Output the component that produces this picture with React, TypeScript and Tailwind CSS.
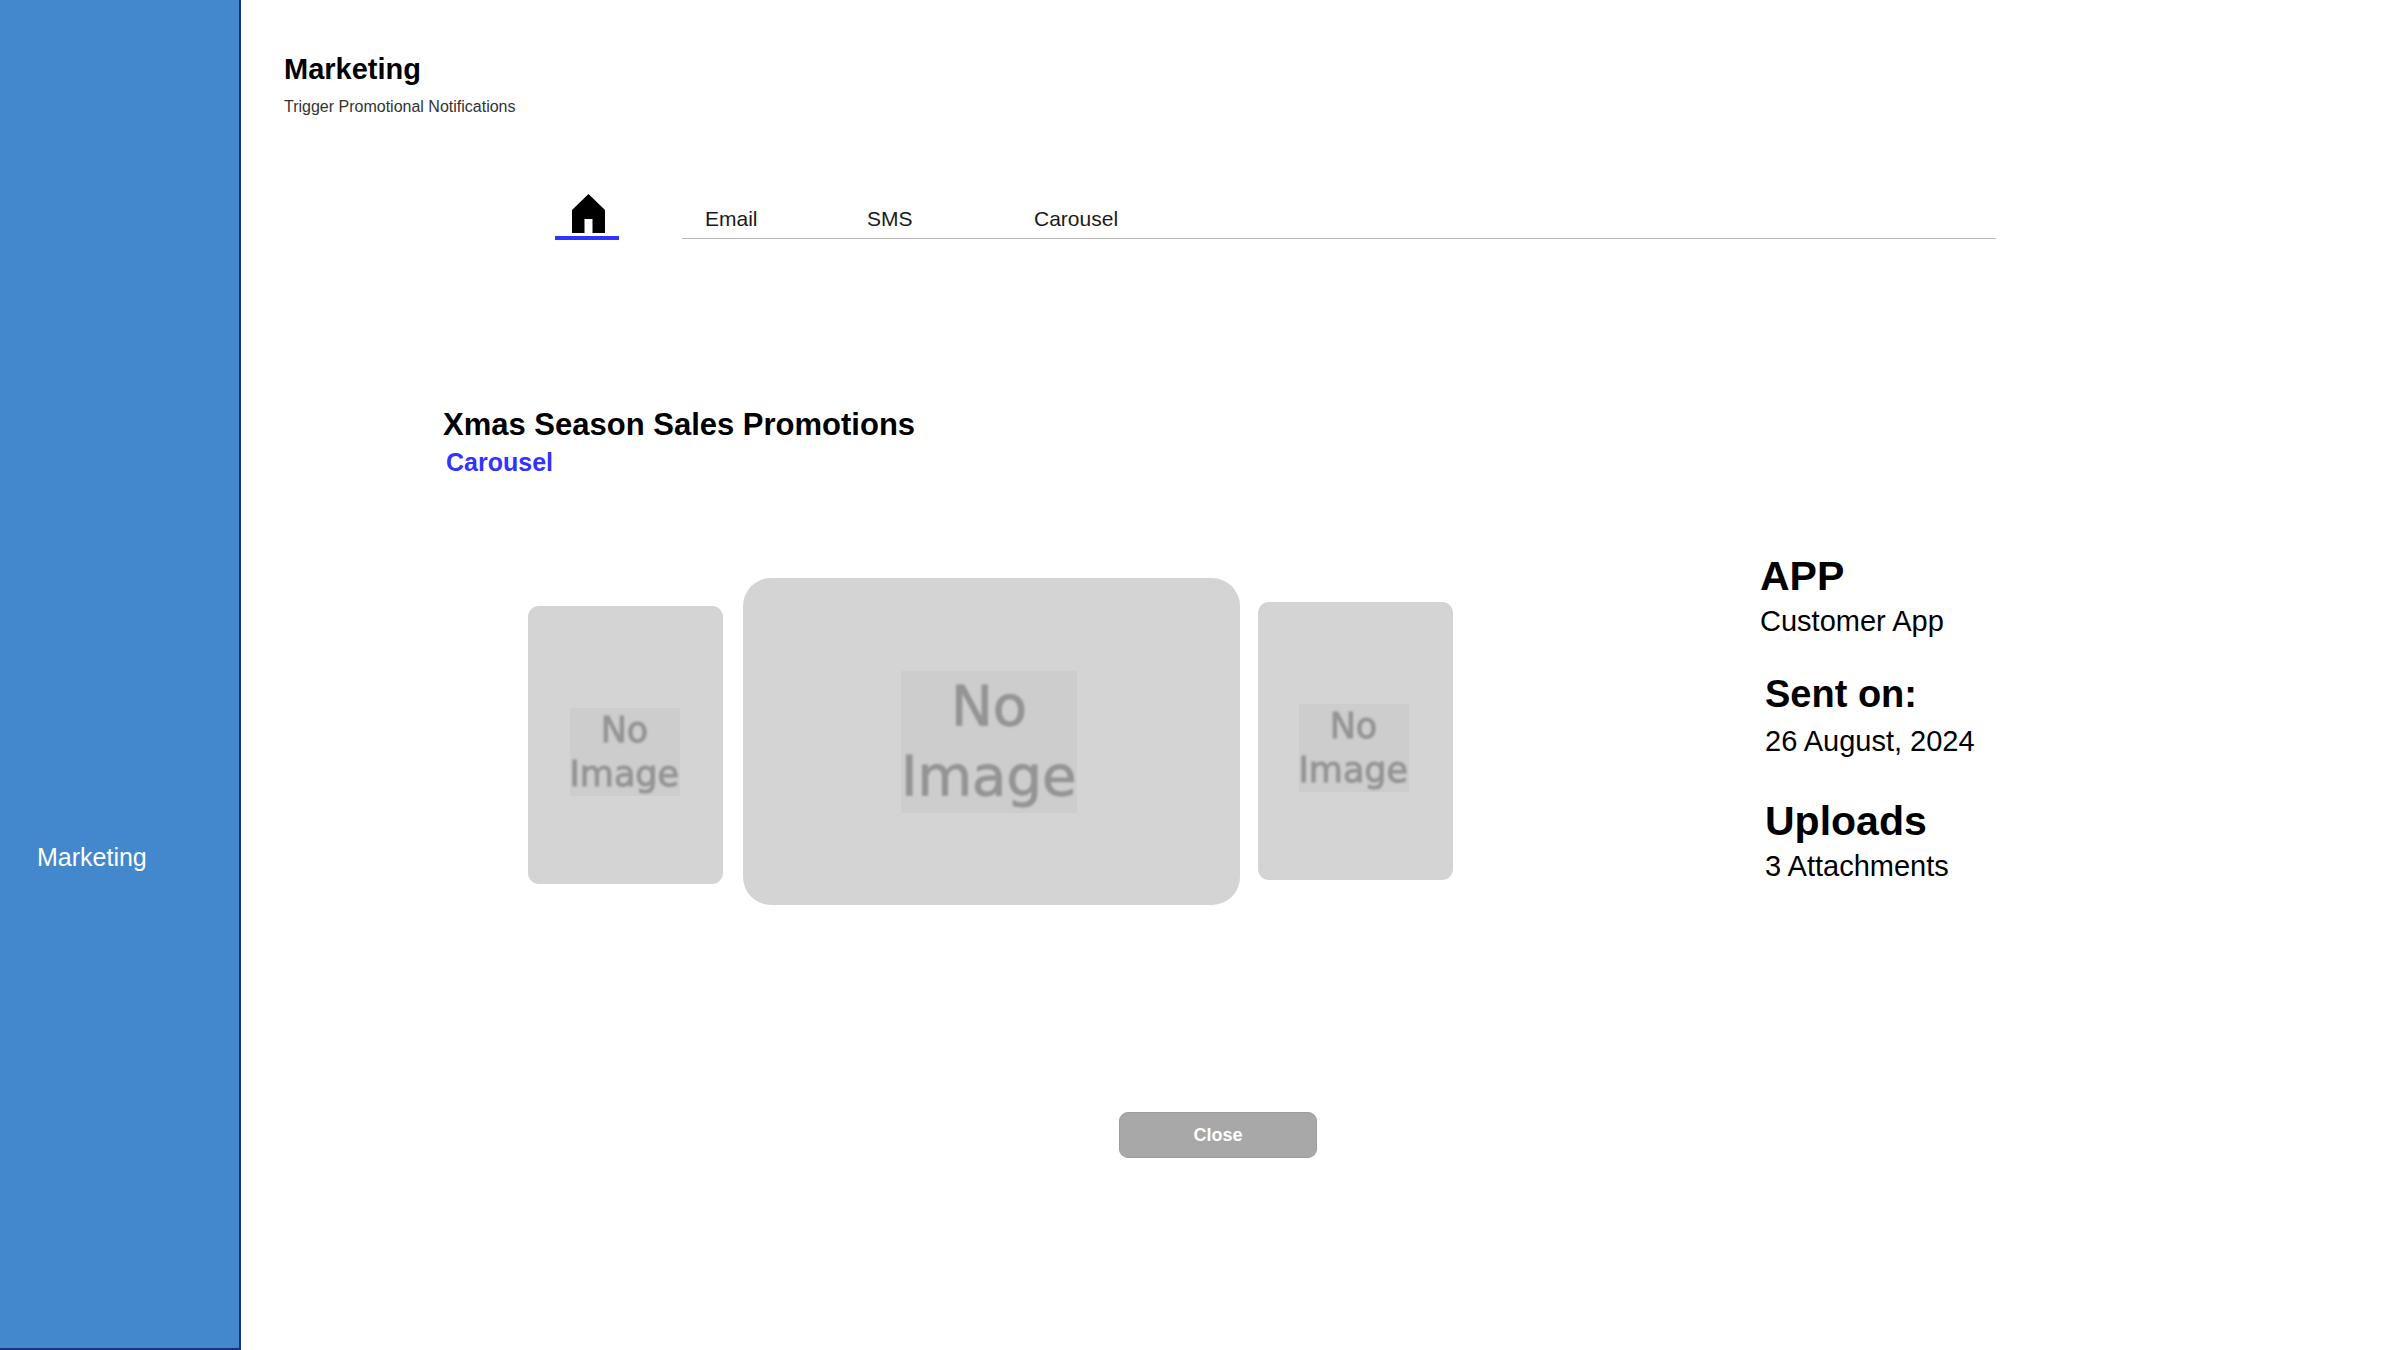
import React from "react";

const tabs = [
  { label: "Email", width: "w-[162px]" },
  { label: "SMS", width: "w-[167px]" },
  { label: "Carousel", width: "w-auto" },
];

function HomeIcon() {
  return (
    <svg viewBox="0 0 33 39" className="h-[39px] w-[33px]" fill="#000" aria-hidden="true">
      <path d="M16.5 0 L33 16 V39 H20.5 V25 H12.5 V39 H0 V16 Z" />
    </svg>
  );
}

function SmallSlide({ className }: { className: string }) {
  return (
    <figure
      className={`flex h-[278px] w-[195px] shrink-0 justify-center rounded-[11px] bg-[#d4d4d4] pt-[102px] ${className}`}
    >
      <div className="h-[88px] w-[110px] overflow-hidden bg-[#cdcdcd] text-center font-['DejaVu_Sans',sans-serif] text-[35px] leading-[44px] text-[#949494] [-webkit-text-stroke:1px_#949494]">
        <p className="blur-[1px]">No</p>
        <p className="text-left whitespace-nowrap blur-[1px]">Image</p>
      </div>
    </figure>
  );
}

function LargeSlide() {
  return (
    <figure className="mr-[18px] ml-5 flex h-[327px] w-[497px] shrink-0 justify-center rounded-[28px] bg-[#d4d4d4] pt-[93px] pr-[5px]">
      <div className="h-[142px] w-[176px] overflow-hidden bg-[#cdcdcd] text-center font-['DejaVu_Sans',sans-serif] text-[56px] leading-[70px] text-[#949494] [-webkit-text-stroke:1px_#949494]">
        <p className="blur-[1px]">No</p>
        <p className="text-left whitespace-nowrap blur-[1px]">Image</p>
      </div>
    </figure>
  );
}

export default function App() {
  return (
    <div className="flex min-h-screen bg-white font-['Liberation_Sans',Arial,sans-serif] text-black">
      <aside className="w-[241px] shrink-0 border-r-2 border-b-2 border-[#1c3080] bg-[#4388cc] pt-[841px] pl-[37px]">
        <a href="#marketing" className="block text-[25px] leading-8 text-white">
          Marketing
        </a>
      </aside>

      <main className="min-w-0 flex-1 pt-[49px]">
        <header className="pl-[43px]">
          <h1 className="text-[29px] leading-10 font-bold">Marketing</h1>
          <p className="mt-1.5 text-[16px] leading-6 text-[#333]">Trigger Promotional Notifications</p>
        </header>

        <nav className="mt-[75px] mr-[404px] ml-[314px] flex items-end">
          <a
            href="#home"
            aria-label="Home"
            className="flex w-16 justify-center border-b-4 border-[#3333ff] pr-px pb-[3px] pl-1"
          >
            <HomeIcon />
          </a>
          <div className="mb-px ml-[63px] flex flex-1 border-b border-[#b8b8b8] pb-[5px] pl-[23px] text-[21px] leading-7 text-[#1a1a1a]">
            {tabs.map((tab) => (
              <button key={tab.label} type="button" className={`text-left ${tab.width}`}>
                {tab.label}
              </button>
            ))}
          </div>
        </nav>

        <section>
          <div className="mt-[165px] ml-[202px]">
            <h2 className="text-[31px] leading-10 font-bold">Xmas Season Sales Promotions</h2>
            <p className="mt-px ml-[3px] text-[25px] leading-8 font-bold text-[#3333ff]">Carousel</p>
          </div>

          <div className="mt-[74px] flex items-start">
            <div className="ml-[287px] flex items-start pt-[26px]">
              <SmallSlide className="mt-7 pr-0.5" />
              <LargeSlide />
              <SmallSlide className="mt-6 pr-1" />
            </div>

            <dl className="ml-[307px] text-[29px] leading-9">
              <div>
                <dt className="text-[41px] leading-[48px] font-bold">APP</dt>
                <dd className="mt-[3px]">Customer App</dd>
              </div>
              <div className="mt-[33px] pl-[5px]">
                <dt className="text-[38px] leading-[44px] font-bold">Sent on:</dt>
                <dd className="mt-[7px]">26 August, 2024</dd>
              </div>
              <div className="mt-[38px] pl-[5px]">
                <dt className="text-[41px] leading-[48px] font-bold">Uploads</dt>
                <dd className="mt-[3px]">3 Attachments</dd>
              </div>
            </dl>
          </div>

          <button
            type="button"
            className="mt-[207px] ml-[878px] h-[46px] w-[198px] rounded-[9px] border border-[#9c9c9c] bg-[#a8a8a8] text-[18px] leading-6 font-bold text-white"
          >
            Close
          </button>
        </section>
      </main>
    </div>
  );
}
